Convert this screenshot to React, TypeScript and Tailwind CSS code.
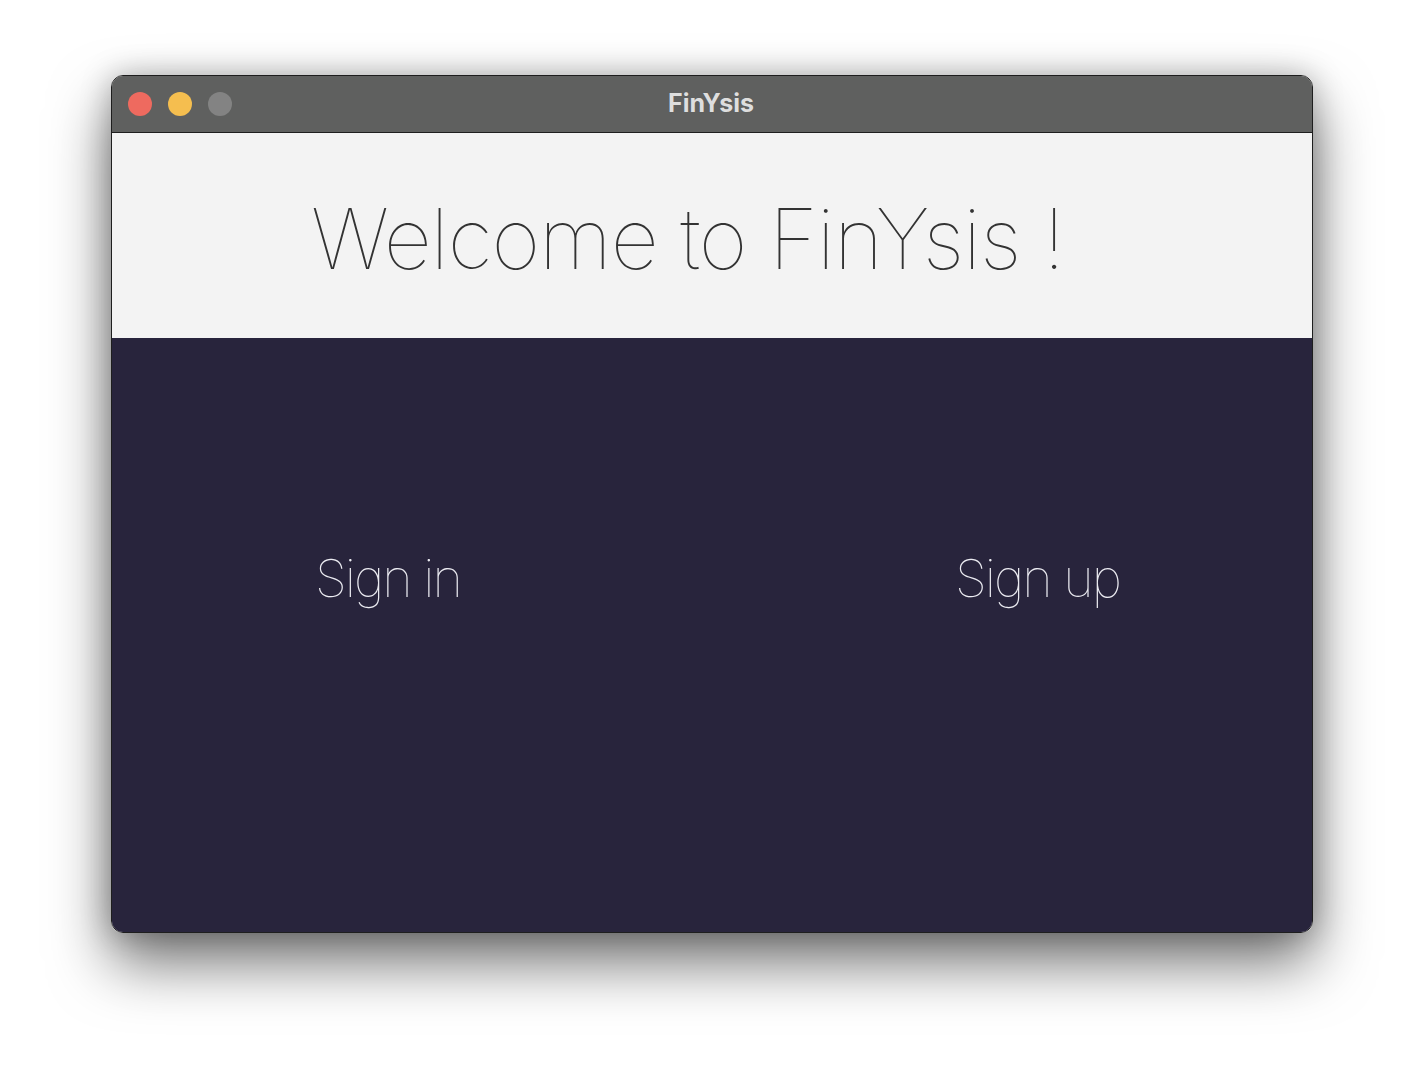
import React from "react";

export default function App() {
  return (
    <div className="w-[1424px] h-[1080px] bg-white overflow-hidden">
      <div className="ml-[111px] mt-[75px] w-[1202px] h-[858px] rounded-[12px] border border-[#1e1e1e] overflow-hidden flex flex-col shadow-[0_30px_60px_rgba(0,0,0,0.55),0_0_30px_rgba(0,0,0,0.25)]">
        <div className="h-[57px] bg-[#5f605f] border-b border-[#1e1e1e] relative flex items-center shrink-0">
          <div className="flex gap-[16px] pl-[16px]">
            <div className="w-[24px] h-[24px] rounded-full bg-[#ee6a5f]" />
            <div className="w-[24px] h-[24px] rounded-full bg-[#f5be4f]" />
            <div className="w-[24px] h-[24px] rounded-full bg-[#838383]" />
          </div>
          <div className="absolute inset-0 flex items-center justify-center text-[25px] font-bold text-[#dedede] pb-[1px] pr-[2px]" style={{ fontFamily: '"Inter", "Open Sans", sans-serif' }}>
            FinYsis
          </div>
        </div>
        <div className="h-[205px] bg-[#f3f3f3] shrink-0 pl-[199px] pt-[64px]">
          <div className="text-[84px] leading-[1] font-thin text-[#333333] tracking-[-1.1px]" style={{ fontFamily: '"Inter", sans-serif' }}>
            Welcome to FinYsis !
          </div>
        </div>
        <div className="flex-1 bg-[#28243c] flex pt-[215px]">
          <div className="pl-[203px] w-[843px] text-[52px] leading-[1] font-thin tracking-[-2px] text-[#ececf2]" style={{ fontFamily: '"Inter", sans-serif' }}>
            Sign in
          </div>
          <div className="text-[52px] leading-[1] font-thin tracking-[-2px] text-[#ececf2]" style={{ fontFamily: '"Inter", sans-serif' }}>
            Sign up
          </div>
        </div>
      </div>
    </div>
  );
}
